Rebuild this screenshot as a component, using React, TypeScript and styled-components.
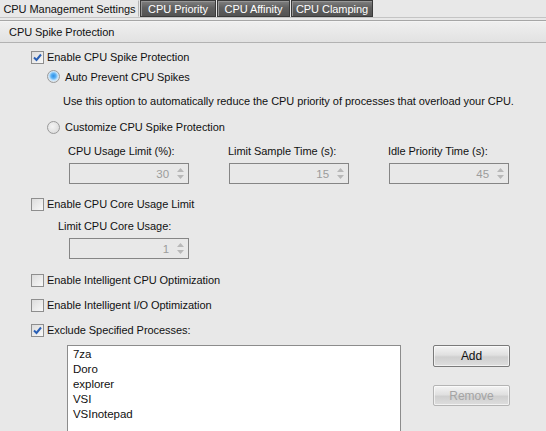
import React from "react"
import styled, { createGlobalStyle } from "styled-components"

const GlobalStyle = createGlobalStyle`
    html, body {
        margin: 0;
        background: #e8e8e8;
        overflow: hidden;
    }
    body {
        font-family: "Liberation Sans", Arial, sans-serif;
        font-size: 11px;
        letter-spacing: -0.05px;
        color: #111;
    }
`;

const Window = styled.div`
    width: 546px;
    height: 431px;
    overflow: hidden;
    background: #e8e8e8;
`;

const TabBar = styled.div`
    display: flex;
    height: 17px;
    border-bottom: 1px solid #c4c4c4;
`;

const Tab = styled.div<{ $active?: boolean; $w: number }>`
    width: ${p => p.$w}px;
    box-sizing: border-box;
    display: flex;
    align-items: center;
    justify-content: center;
    margin-right: 1px;
    white-space: nowrap;
    font-size: 11px;
    color: ${p => (p.$active ? "#111" : "#fff")};
    background: ${p => (p.$active ? "#e8e8e8" : "linear-gradient(#808080, #606060 45%, #535353)")};
    border: 1px solid ${p => (p.$active ? "#e8e8e8" : "#3a3a3a")};
    border-right-color: ${p => (p.$active ? "#b4b4b4" : "#3a3a3a")};
    box-shadow: ${p => (p.$active ? "none" : "inset 1px 1px 0 #959595")};
`;

const Rule = styled.div`
    margin-top: 2px;
    height: 1px;
    background: #a6a6a6;
    border-bottom: 1px solid #f4f4f4;
`;

const SectionHeader = styled.div`
    height: 20px;
    display: flex;
    align-items: center;
    padding-left: 9px;
    font-size: 11px;
    background: linear-gradient(#efefef, #e2e2e2);
    border-bottom: 1px solid #b2b2b2;
`;

const Body = styled.div`
    padding-left: 31px;
    display: flex;
    flex-direction: column;
`;

const Row = styled.div<{ $top: number; $indent?: number; $h?: number }>`
    display: flex;
    align-items: center;
    height: ${p => p.$h ?? 20}px;
    margin-top: ${p => p.$top}px;
    padding-left: ${p => p.$indent ?? 0}px;
    white-space: nowrap;
`;

const Label = styled.span`
    margin-left: 3px;
`;

const Box = styled.span`
    width: 11px;
    height: 11px;
    border: 1px solid #8e8e8e;
    background: linear-gradient(135deg, #dcdcdc, #f8f8f8);
    display: inline-flex;
    align-items: center;
    justify-content: center;
    flex: none;
`;

const Dot = styled.span<{ $on?: boolean }>`
    width: 11px;
    height: 11px;
    border-radius: 50%;
    border: 1px solid #9a9a9a;
    flex: none;
    background: ${p =>
        p.$on
            ? "radial-gradient(circle at 50% 45%, #2e8fe6 0, #5bb1f4 30%, #c7e4fb 55%, #e6e6e6 75%)"
            : "radial-gradient(circle at 40% 40%, #f4f4f4, #d6d6d6)"};
    margin-right: 2px;
`;

const Check = ({ on, label }: { on?: boolean; label: string }) => (
    <>
        <Box>
            {on && (
                <svg width="9" height="9" viewBox="0 0 9 9">
                    <path d="M1 4.5 L3.5 7 L8 1.5" fill="none" stroke="#2a5fb5" strokeWidth="2" />
                </svg>
            )}
        </Box>
        <Label>{label}</Label>
    </>
);

const Fields = styled.div<{ $top: number }>`
    display: grid;
    grid-template-columns: repeat(3, 160px);
    padding-left: 37px;
    margin-top: ${p => p.$top}px;
`;

const FieldLabel = styled.div`
    height: 20px;
    display: flex;
    align-items: center;
`;

const Spin = styled.div<{ $top?: number; $left?: number }>`
    width: 120px;
    height: 21px;
    box-sizing: border-box;
    border: 1px solid #858585;
    margin-top: ${p => p.$top ?? 2}px;
    margin-left: ${p => p.$left ?? 1}px;
    display: flex;
    align-items: center;
    justify-content: flex-end;
    color: #9c9c9c;
    font-size: 11.5px;
`;

const Arrows = styled.span`
    width: 15px;
    display: flex;
    flex-direction: column;
    align-items: center;
    gap: 3px;
    margin-left: 4px;
`;

const SpinBox = ({ value, top, left }: { value: number; top?: number; left?: number }) => (
    <Spin $top={top} $left={left}>
        {value}
        <Arrows>
            <svg width="7" height="4" viewBox="0 0 7 4"><path d="M0 4 L3.5 0 L7 4Z" fill="#b8b8b8" /></svg>
            <svg width="7" height="4" viewBox="0 0 7 4"><path d="M0 0 L3.5 4 L7 0Z" fill="#b8b8b8" /></svg>
        </Arrows>
    </Spin>
);

const Processes = styled.div`
    display: flex;
    margin-top: 5px;
    padding-left: 36px;
`;

const ListBox = styled.div`
    width: 334px;
    height: 100px;
    box-sizing: border-box;
    border: 1px solid #8c8c8c;
    background: #fff;
    padding: 1px 0 0 5px;
    font-size: 11.5px;
    line-height: 15px;
`;

const Buttons = styled.div`
    display: flex;
    flex-direction: column;
    gap: 18px;
    margin-left: 32px;
`;

const Button = styled.div<{ $disabled?: boolean }>`
    width: 77px;
    height: ${p => (p.$disabled ? 21 : 22)}px;
    box-sizing: border-box;
    display: flex;
    align-items: center;
    justify-content: center;
    font-size: 12px;
    color: ${p => (p.$disabled ? "#a4a4a4" : "#111")};
    border: 1px solid ${p => (p.$disabled ? "#b4b4b4" : "#7a7a7a")};
    border-radius: 2px;
    background: linear-gradient(#f4f4f4, #e0e0e0 45%, #cfcfcf 55%, #dedede);
    box-shadow: inset 0 0 0 1px rgba(255, 255, 255, 0.6);
`;

const tabs = [
    { name: "CPU Management Settings", w: 139 },
    { name: "CPU Priority", w: 76 },
    { name: "CPU Affinity", w: 73 },
    { name: "CPU Clamping", w: 82 },
];

const processes = ["7za", "Doro", "explorer", "VSI", "VSInotepad"];

export default function App() {
    return (
        <Window>
            <GlobalStyle />
            <TabBar>
                {tabs.map((t, i) => (
                    <Tab key={t.name} $w={t.w} $active={i === 0}>{t.name}</Tab>
                ))}
            </TabBar>
            <Rule />
            <SectionHeader>CPU Spike Protection</SectionHeader>
            <Body>
                <Row $top={4}><Check on label="Enable CPU Spike Protection" /></Row>
                <Row $top={0} $h={19} $indent={16}><Dot $on /><Label>Auto Prevent CPU Spikes</Label></Row>
                <Row $top={5} $indent={32}>Use this option to automatically reduce the CPU priority of processes that overload your CPU.</Row>
                <Row $top={6} $indent={16}><Dot /><Label>Customize CPU Spike Protection</Label></Row>
                <Fields $top={4}>
                    <FieldLabel>CPU Usage Limit (%):</FieldLabel>
                    <FieldLabel>Limit Sample Time (s):</FieldLabel>
                    <FieldLabel>Idle Priority Time (s):</FieldLabel>
                    <SpinBox value={30} />
                    <SpinBox value={15} />
                    <SpinBox value={45} />
                </Fields>
                <Row $top={10}><Check label="Enable CPU Core Usage Limit" /></Row>
                <Row $top={2} $indent={27}>Limit CPU Core Usage:</Row>
                <SpinBox value={1} left={38} />
                <Row $top={11}><Check label="Enable Intelligent CPU Optimization" /></Row>
                <Row $top={5}><Check label="Enable Intelligent I/O Optimization" /></Row>
                <Row $top={5}><Check on label="Exclude Specified Processes:" /></Row>
                <Processes>
                    <ListBox>
                        {processes.map(p => <div key={p}>{p}</div>)}
                    </ListBox>
                    <Buttons>
                        <Button>Add</Button>
                        <Button $disabled>Remove</Button>
                    </Buttons>
                </Processes>
            </Body>
        </Window>
    )
}
